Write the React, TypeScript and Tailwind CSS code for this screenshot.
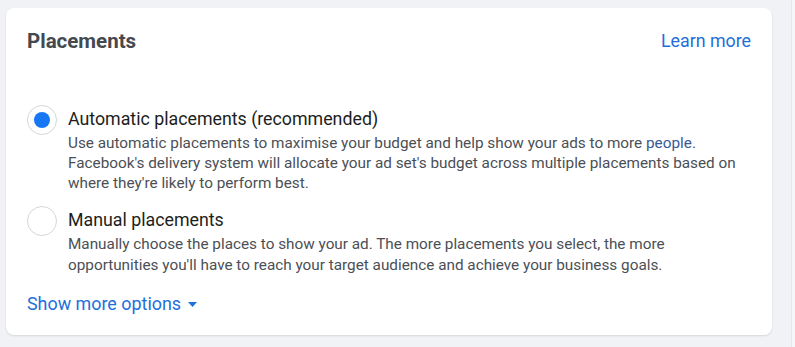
import React from "react";

function Radio({ checked }: { checked?: boolean }) {
  return (
    <div className="w-[30px] h-[30px] shrink-0 rounded-full border-[1.5px] border-[#d4d6da] bg-white flex items-center justify-center">
      {checked && <div className="w-[16px] h-[16px] rounded-full bg-[#1877f2]" />}
    </div>
  );
}

export default function App() {
  return (
    <div
      className="w-[795px] h-[347px] bg-[#f0f2f5] flex"
      style={{ fontFamily: "Roboto, 'Liberation Sans', sans-serif" }}
    >
      <div className="w-[791px] pt-[8px] pl-[6px]">
        <div className="w-[766px] h-[327px] bg-white rounded-[8px] shadow-[0_1px_2px_rgba(0,0,0,0.12)] pl-[21px] pr-[21px] pt-[21px]">
          <div className="flex items-center justify-between h-[24px]">
            <h2 className="text-[20.5px] leading-[24px] font-bold text-[#444950]">Placements</h2>
            <a className="text-[17.8px] leading-[24px] text-[#216fdb]">Learn more</a>
          </div>

          <div className="mt-[52px] flex gap-[11px]">
            <Radio checked />
            <div className="pt-[2px]">
              <div className="text-[17.8px] leading-[24px] text-[#1c1e21]">Automatic placements (recommended)</div>
              <p className="mt-[2px] text-[15.3px] leading-[20px] text-[#4b4f56]">
                Use automatic placements to maximise your budget and help show your ads to more{" "}
                <span className="text-[#385898]">people</span>.
                <br />
                Facebook's delivery system will allocate your ad set's budget across multiple placements based on
                <br />
                where they're likely to perform best.
              </p>
            </div>
          </div>

          <div className="mt-[13px] flex gap-[11px]">
            <Radio />
            <div className="pt-[2px]">
              <div className="text-[17.8px] leading-[24px] text-[#1c1e21]">Manual placements</div>
              <p className="mt-[2px] text-[15.3px] leading-[20.5px] text-[#4b4f56]">
                Manually choose the places to show your ad. The more placements you select, the more
                <br />
                opportunities you'll have to reach your target audience and achieve your business goals.
              </p>
            </div>
          </div>

          <div className="mt-[17px] flex items-center gap-[7px] text-[17.9px] leading-[24px] text-[#216fdb]">
            <span>Show more options</span>
            <svg width="9" height="5" viewBox="0 0 9 5">
              <path d="M0 0 L9 0 L4.5 5 Z" fill="#216fdb" />
            </svg>
          </div>
        </div>
      </div>
      <div className="flex-1 border-l border-[#e4e6e9] bg-[#f5f6f7]" />
    </div>
  );
}
